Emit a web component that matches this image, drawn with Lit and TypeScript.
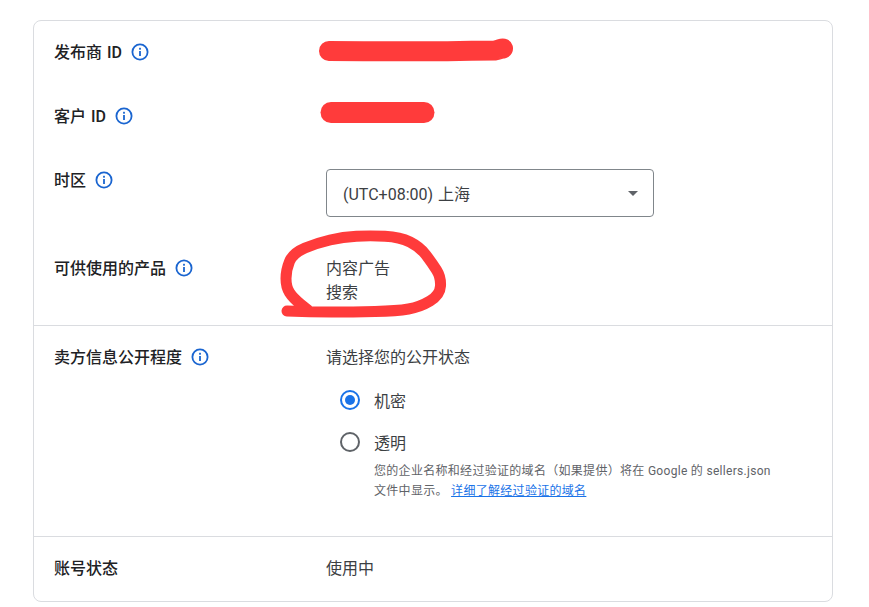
import { LitElement, html, css, svg } from "lit";
import { customElement } from "lit/decorators.js";

const info = html`<svg class="info" viewBox="0 0 18 18" width="18" height="18" aria-hidden="true">
  <circle cx="9" cy="9" r="7.6" fill="none" stroke="#1a65d0" stroke-width="1.8"></circle>
  <rect x="8.1" y="8" width="1.8" height="5" fill="#1a65d0"></rect>
  <rect x="8.1" y="4.8" width="1.8" height="1.9" fill="#1a65d0"></rect>
</svg>`;

const circlePoints: [number, number][] = [
  [287, 311], [310, 312], [353, 312], [397, 311], [420, 307], [440, 295], [441, 277], [432, 263], [420, 247],
  [400, 237], [370, 235.5], [343, 237], [317, 243], [293, 253], [286, 270], [286, 287], [293, 298], [308, 310],
];

function smooth(points: [number, number][]): string {
  let d = `M${points[0][0]} ${points[0][1]}`;
  for (let i = 1; i < points.length - 1; i++) {
    const [x, y] = points[i];
    const [nx, ny] = points[i + 1];
    d += ` Q${x} ${y} ${(x + nx) / 2} ${(y + ny) / 2}`;
  }
  const last = points[points.length - 1];
  return `${d} L${last[0]} ${last[1]}`;
}

const scribbles = svg`
  <path d="M329 51 C 380 51.5, 440 51.5, 495 50.5 C 500 49.5, 502 48, 503 48.5" fill="none" stroke="#ff3b3b" stroke-width="20" stroke-linecap="round" stroke-linejoin="round"></path>
  <path d="M331 112.5 L 424 112.5" fill="none" stroke="#ff3b3b" stroke-width="21" stroke-linecap="round"></path>
  <path d="${smooth(circlePoints)}" fill="none" stroke="#ff3b3b" stroke-width="11" stroke-linecap="round" stroke-linejoin="round"></path>`;

@customElement("app-root")
export class AppRoot extends LitElement {
  static styles = css`
    :host {
      display: block;
      width: 869px;
      height: 607px;
      position: relative;
      box-sizing: border-box;
      padding: 20px 36px 0 33px;
      background: #fff;
      overflow: hidden;
      font-family: Roboto, "Noto Sans CJK SC", sans-serif;
      font-size: 16px;
      line-height: 24px;
      color: #3c4043;
    }
    .card {
      border: 1px solid #dadce0;
      border-radius: 8px;
      height: 582px;
      box-sizing: border-box;
      display: flex;
      flex-direction: column;
    }
    .section {
      box-sizing: border-box;
      border-bottom: 1px solid #dadce0;
      padding: 19px 20px 0;
      display: flex;
      flex-direction: column;
    }
    .section:last-child { border-bottom: none; }
    .s1 { height: 305px; gap: 40px; }
    .s2 { height: 211px; }
    .s3 { flex: 1; }
    .row {
      display: grid;
      grid-template-columns: 272px 1fr;
    }
    .label {
      display: flex;
      align-items: center;
      gap: 9px;
      height: 24px;
      color: #202124;
      font-weight: 500;
      font-size: 16px;
      word-spacing: 1px;
    }
    .info { flex: none; }
    .value, .t {
      font-size: 16px;
      padding-top: 1px;
      margin-bottom: -1px;
    }
    .select {
      width: 328px;
      height: 48px;
      margin-top: 1px;
      box-sizing: border-box;
      border: 1px solid #80868b;
      border-radius: 4px;
      padding: 4px 20px 0 16px;
      display: flex;
      align-items: center;
      justify-content: space-between;
      word-spacing: 1px;
    }
    .caret {
      width: 0;
      height: 0;
      border-left: 5px solid transparent;
      border-right: 5px solid transparent;
      border-top: 5px solid #5f6368;
      margin: -3px -5px 0 0;
    }
    .select-row { height: 48px; }
    .radios {
      display: flex;
      flex-direction: column;
      margin-top: 20px;
      padding-left: 14px;
    }
    .radio {
      display: flex;
      align-items: center;
      gap: 14px;
      height: 24px;
    }
    .radio + .radio { margin-top: 18px; }
    .dot {
      width: 20px;
      height: 20px;
      box-sizing: border-box;
      border: 2px solid #5f6368;
      border-radius: 50%;
      flex: none;
      display: flex;
      align-items: center;
      justify-content: center;
      margin-top: -2px;
    }
    .dot.on { border-color: #1a73e8; }
    .dot.on::after {
      content: "";
      width: 10px;
      height: 10px;
      border-radius: 50%;
      background: #1a73e8;
    }
    .desc {
      margin: 6px 0 0 34px;
      font-size: 12px;
      line-height: 20px;
      letter-spacing: 0.3px;
      color: #5f6368;
      width: 405px;
    }
    a { color: #1a73e8; text-decoration: underline; }
    .ink {
      position: absolute;
      inset: 0;
      width: 869px;
      height: 607px;
      pointer-events: none;
    }
  `;

  render() {
    return html`
      <div class="card">
        <div class="section s1">
          <div class="row">
            <div class="label"><span class="t">发布商 ID</span>${info}</div>
            <div class="value"></div>
          </div>
          <div class="row">
            <div class="label"><span class="t">客户 ID</span>${info}</div>
            <div class="value"></div>
          </div>
          <div class="row select-row">
            <div class="label"><span class="t">时区</span>${info}</div>
            <div class="select"><span>(UTC+08:00) 上海</span><span class="caret"></span></div>
          </div>
          <div class="row">
            <div class="label"><span class="t">可供使用的产品</span>${info}</div>
            <div class="value">内容广告<br />搜索</div>
          </div>
        </div>
        <div class="section s2">
          <div class="row">
            <div class="label"><span class="t">卖方信息公开程度</span>${info}</div>
            <div>
              <div class="value">请选择您的公开状态</div>
              <div class="radios">
                <div class="radio"><span class="dot on"></span><span class="value">机密</span></div>
                <div class="radio"><span class="dot"></span><span class="value">透明</span></div>
                <div class="desc">您的企业名称和经过验证的域名（如果提供）将在 Google 的 sellers.json 文件中显示。 <a href="#">详细了解经过验证的域名</a></div>
              </div>
            </div>
          </div>
        </div>
        <div class="section s3">
          <div class="row">
            <div class="label"><span class="t">账号状态</span></div>
            <div class="value">使用中</div>
          </div>
        </div>
      </div>
      <svg class="ink" viewBox="0 0 869 607" aria-hidden="true">${scribbles}</svg>
    `;
  }
}
